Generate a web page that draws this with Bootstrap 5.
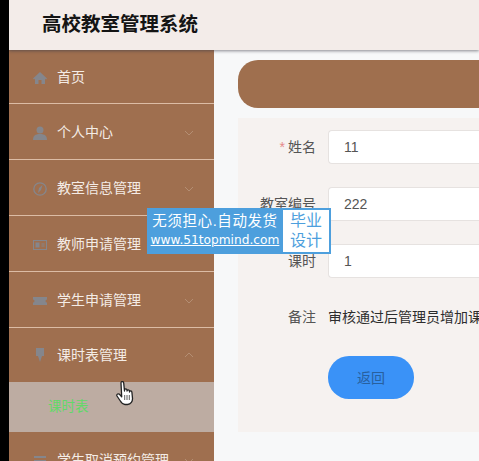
<!DOCTYPE html>
<html lang="zh-CN">
<head>
  <meta charset="UTF-8">
  <title>高校教室管理系统</title>
  <link href="https://cdn.jsdelivr.net/npm/bootstrap@5.3.0/dist/css/bootstrap.min.css" rel="stylesheet">
  <style>
    html, body { height: 100%; overflow: hidden; }
    body { background: #000; font-family: "Liberation Sans", "Noto Sans CJK SC", sans-serif; }
    .app-shell { margin-left: 9px; height: 461px; position: relative; overflow: hidden; background: #f7f8f9; }
    .app-head { height: 50px; background: #f3ece9; padding-left: 33px; font-size: 19.500px; font-weight: 700; color: #141414; box-shadow: 0 1px 3px rgba(60,60,70,.6); position: relative; z-index: 1; }
    .side-menu { width: 205px; background: #9f6f4f; flex: none; }
    .menu-row { height: 56px; padding: 2px 20px 0 24px; color: #f4ece6; font-size: 14px; border-bottom: 1px solid #dcbca5; }
    .menu-row.first-row { height: 54px; }
    .menu-row.open-row { height: 54px; padding-top: 0; border-bottom: 0; }
    .menu-row svg.ico { width: 14px; height: 14px; margin-right: 10px; flex: none; fill: #85868c; }
    .menu-row svg.chev { width: 10px; height: 6px; margin-left: auto; fill: none; stroke: #b48e73; stroke-width: 1; }
    .sub-row { height: 50px; padding-left: 39px; background: #bdaca2; color: #62d968; font-size: 13.500px; }
    .main-area { flex: 1; min-width: 0; padding: 10px 0 0 24px; }
    .top-pill { height: 48px; background: #9f6f4e; border-radius: 20px 0 0 20px; margin-bottom: 10px; }
    .form-panel { height: 314px; background: #f6f2f0; padding-top: 12px; font-size: 14px; color: #3d3d3d; }
    .field-row { height: 34px; margin-bottom: 23px; }
    .field-label { width: 78px; text-align: right; margin-right: 12px; color: #555; flex: none; }
    .field-label i { color: #e58a8a; font-style: normal; margin-right: 3px; }
    .field-input { flex: 1; height: 34px; background: #fff; border: 1px solid #e6e2e0; border-right: 0; border-radius: 4px 0 0 4px; padding: 1px 0 0 15px; color: #555; }
    .note-row { height: 20px; margin-top: 29px; margin-bottom: 29px; white-space: nowrap; color: #2d2d2d; }
    .back-btn { width: 86px; height: 43px; margin-left: 90px; padding-top: 3px; border: 0; border-radius: 21px; background: #3a92f7; color: #28609e; font-size: 14px; }
    .promo-tag { position: absolute; left: 138px; top: 208px; width: 184px; height: 46px; background: #4d9fdd; color: #fff; }
    .promo-left { width: 136px; text-align: center; white-space: nowrap; }
    .promo-a { font-size: 14.500px; line-height: 20px; margin-top: 3px; letter-spacing: .6px; }
    .promo-b { font-family: "DejaVu Sans", sans-serif; font-size: 12.200px; line-height: 19px; text-decoration: underline; }
    .promo-right { width: 46px; margin: 2px 2px 2px 0; background: #fff; color: #4d9fdd; font-size: 16px; line-height: 20px; text-align: center; padding-top: 1px; }
    .hand-cursor { position: absolute; left: 107px; top: 381px; width: 19px; height: 25px; }
  </style>
</head>
<body>
  <div class="app-shell">
    <div class="app-head d-flex align-items-center">高校教室管理系统</div>
    <div class="d-flex">
      <div class="side-menu">
        <div class="menu-row first-row d-flex align-items-center">
          <svg class="ico" viewBox="0 0 14 14"><path d="M7 1 0 7.500 1 8.500 2 7.800V13h3.500V9h3v4H12V7.800l1 .7 1-1z"/></svg>首页
        </div>
        <div class="menu-row d-flex align-items-center">
          <svg class="ico" viewBox="0 0 14 14"><circle cx="7" cy="4" r="3.500"/><path d="M0 14c0-4 2-6 7-6s7 2 7 6z"/></svg>个人中心
          <svg class="chev" viewBox="0 0 10 6"><path d="M1 1l4 4 4-4"/></svg>
        </div>
        <div class="menu-row d-flex align-items-center">
          <svg class="ico" viewBox="0 0 14 14"><circle cx="7" cy="7" r="6.200" fill="none" stroke="#85868c" stroke-width="1.300"/><path d="M9.500 3 8 8 5 11l1-5z"/></svg>教室信息管理
          <svg class="chev" viewBox="0 0 10 6"><path d="M1 1l4 4 4-4"/></svg>
        </div>
        <div class="menu-row d-flex align-items-center">
          <svg class="ico" viewBox="0 0 14 14"><path fill-rule="evenodd" d="M0 2h14v10H0zm1 1v8h12V3zm1.500 1.500h4v5h-4zm6 1h3v1h-3zm0 2h3v1h-3z"/></svg>教师申请管理
          <svg class="chev" viewBox="0 0 10 6"><path d="M1 1l4 4 4-4"/></svg>
        </div>
        <div class="menu-row d-flex align-items-center">
          <svg class="ico" viewBox="0 0 14 14"><path d="M0 3h14v2.500a1.500 1.500 0 0 0 0 3V11H0V8.500a1.500 1.500 0 0 0 0-3z"/></svg>学生申请管理
          <svg class="chev" viewBox="0 0 10 6"><path d="M1 1l4 4 4-4"/></svg>
        </div>
        <div class="menu-row open-row d-flex align-items-center">
          <svg class="ico" viewBox="0 0 14 14"><path d="M3 0h8v8H9l-2 6-2-6H3z"/></svg>课时表管理
          <svg class="chev" viewBox="0 0 10 6"><path d="M1 5l4-4 4 4"/></svg>
        </div>
        <div class="sub-row d-flex align-items-center">课时表</div>
        <div class="menu-row d-flex align-items-center">
          <svg class="ico" viewBox="0 0 14 14"><path d="M1 2h12v2H1zm0 4h12v2H1zm0 4h12v2H1z"/></svg>学生取消预约管理
          <svg class="chev" viewBox="0 0 10 6"><path d="M1 1l4 4 4-4"/></svg>
        </div>
      </div>
      <div class="main-area">
        <div class="top-pill"></div>
        <div class="form-panel">
          <div class="field-row d-flex align-items-center">
            <div class="field-label"><i>*</i>姓名</div>
            <div class="field-input d-flex align-items-center">11</div>
          </div>
          <div class="field-row d-flex align-items-center">
            <div class="field-label">教室编号</div>
            <div class="field-input d-flex align-items-center">222</div>
          </div>
          <div class="field-row d-flex align-items-center">
            <div class="field-label">课时</div>
            <div class="field-input d-flex align-items-center">1</div>
          </div>
          <div class="note-row d-flex align-items-center">
            <div class="field-label">备注</div>
            <div>审核通过后管理员增加课时</div>
          </div>
          <button type="button" class="back-btn d-block">返回</button>
        </div>
      </div>
    </div>
    <div class="promo-tag d-flex">
      <div class="promo-left">
        <div class="promo-a">无须担心.自动发货</div>
        <div class="promo-b">www.51topmind.com</div>
      </div>
      <div class="promo-right">毕业<br>设计</div>
    </div>
    <svg class="hand-cursor" viewBox="0 0 19 25">
      <path d="M5 2c0-2 2.500-2 2.700 0l.8 8V9c0-1.500 2.300-1.500 2.500 0v1c0-1.500 2.300-1.500 2.500 0v1c.2-1.500 2.300-1.300 2.400.2l.6 6c.2 3-1.500 6.300-5 6.300H9c-2.500 0-3.500-1.500-5-4L1 15c-.8-1.700 1.500-3 2.700-1.500l2 2.300z" fill="#fff" stroke="#222" stroke-width="1.300" stroke-linejoin="round"/>
      <path d="M8.700 14v5M11 14v5M13.300 14v5" stroke="#333" stroke-width=".8"/>
    </svg>
  </div>
  <script src="https://cdn.jsdelivr.net/npm/bootstrap@5.3.0/dist/js/bootstrap.bundle.min.js"></script>
</body>
</html>
